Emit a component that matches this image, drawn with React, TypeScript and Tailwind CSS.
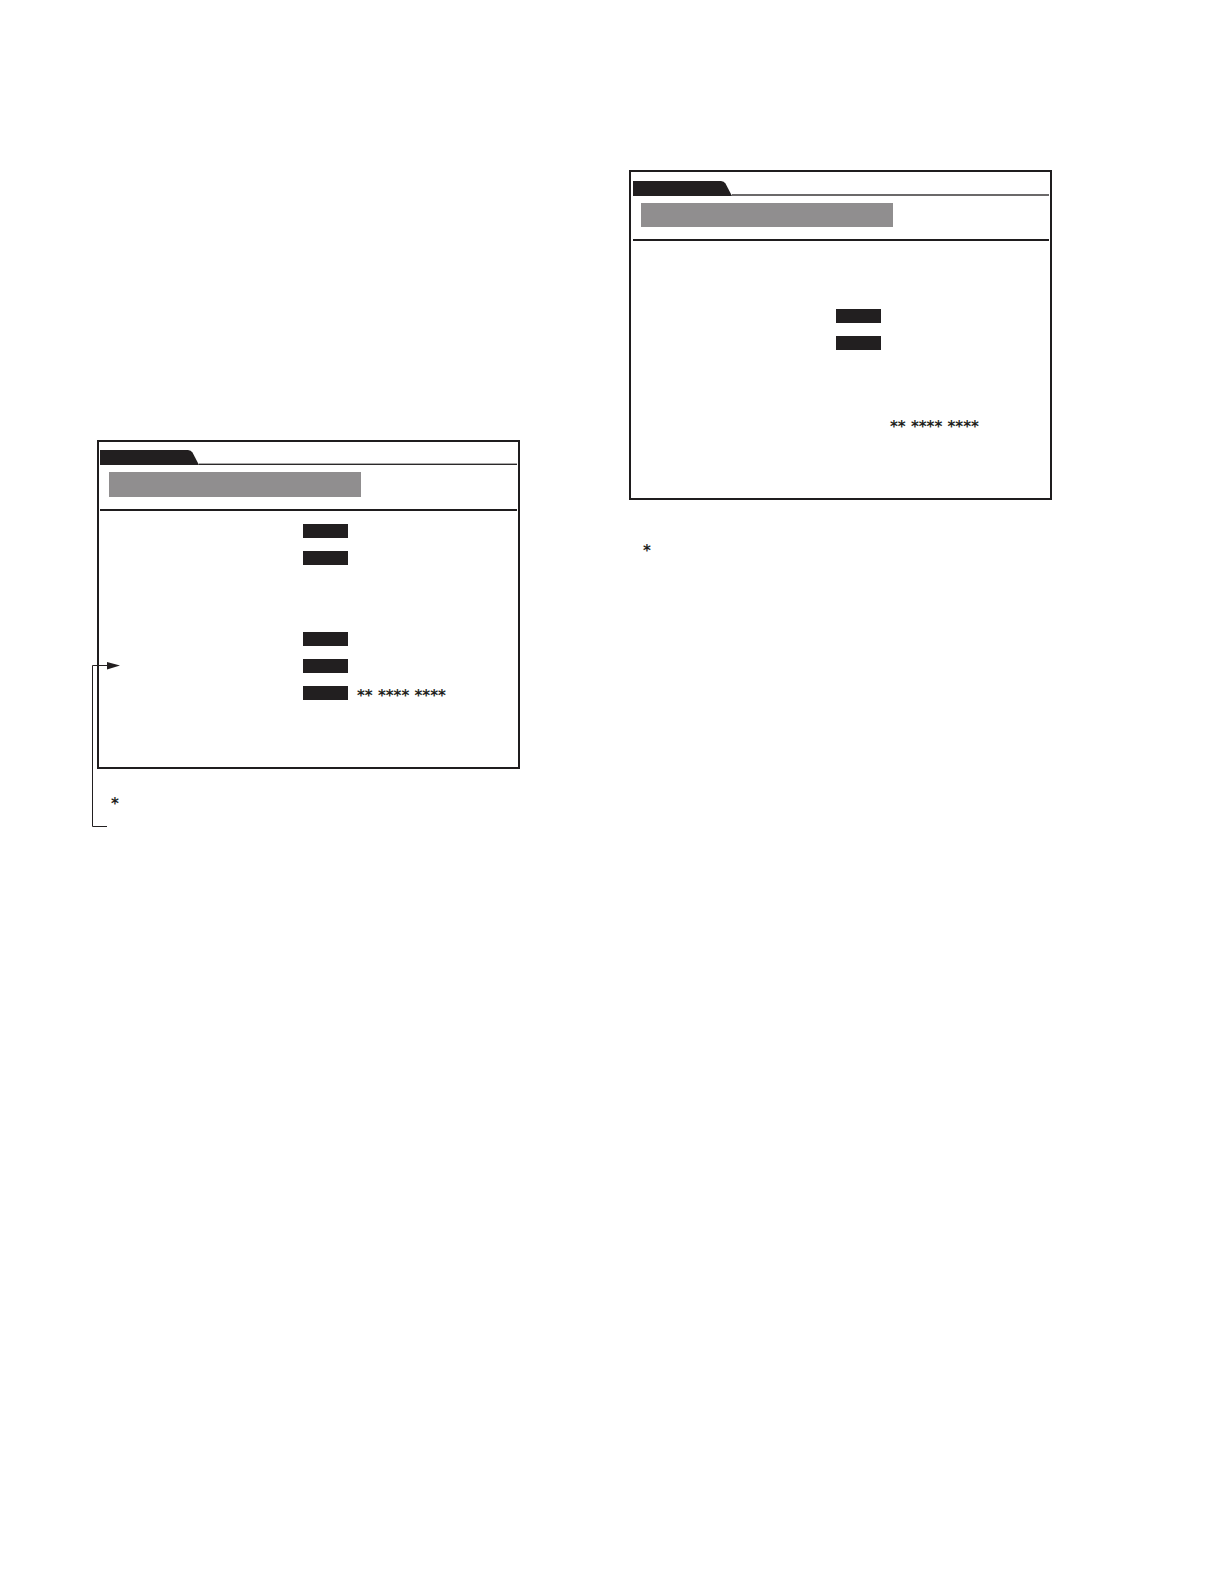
import clsx from 'clsx';

interface Row {
  chip?: boolean;
  value?: string;
}

interface ScreenPanelProps {
  rows: Row[];
  className: string;
  headerClass: string;
  ruleClass: string;
  bannerClass: string;
  bodyClass: string;
}

const MASKED = '** **** ****';

const leftRows: Row[] = [
  { chip: true },
  { chip: true },
  {},
  {},
  { chip: true },
  { chip: true },
  { chip: true, value: MASKED },
];

const rightRows: Row[] = [{}, {}, { chip: true }, { chip: true }, {}, {}, { value: MASKED }];

function ScreenPanel({
  rows,
  className,
  headerClass,
  ruleClass,
  bannerClass,
  bodyClass,
}: ScreenPanelProps) {
  return (
    <section className={clsx('border-2 border-[#1f1d1e] pr-px', className)}>
      {/* Tab with its rule */}
      <div className={clsx('flex items-end', headerClass)}>
        <svg className="h-[15px] w-[99px] shrink-0" viewBox="0 0 99 15" aria-hidden="true">
          <path d="M0 0H88Q91 0 92.5 2.5L99 15H0Z" fill="#221f20" />
        </svg>
        <div className={clsx('h-0.5 flex-1', ruleClass)} />
      </div>

      {/* Title banner */}
      <div className="border-b-2 border-[#1f1d1e] pt-[7px] pb-3">
        <div className={clsx('w-[252px] bg-[#908e8f]', bannerClass)} />
      </div>

      {/* Setting rows */}
      <ul className={clsx('flex flex-col gap-[13px] pb-[67px] pl-[203px]', bodyClass)}>
        {rows.map((row, i) => (
          <li key={i} className="flex h-3.5 items-start gap-[9px]">
            <span className={clsx('h-3.5 w-[45px] shrink-0', row.chip && 'bg-[#221f20]')} />
            {row.value && <span className="whitespace-nowrap">{row.value}</span>}
          </li>
        ))}
      </ul>
    </section>
  );
}

function PointerArrow() {
  return (
    <svg
      className="absolute top-[222px] -left-[5px] h-[165px] w-7"
      viewBox="0 0 28 165"
      aria-hidden="true"
    >
      <path d="M15 164.5H0.5V3.5H17" fill="none" stroke="#221f20" />
      <path d="M15 0L28 3.5L15 7.5Z" fill="#221f20" />
    </svg>
  );
}

export default function App() {
  return (
    <main className="grid min-h-screen grid-cols-2 gap-[109px] bg-white pr-[167px] pl-[97px] font-['DejaVu_Sans',sans-serif] text-[15px] leading-5 font-bold text-[#221f20]">
      <div className="pt-[440px]">
        <div className="relative">
          <ScreenPanel
            rows={leftRows}
            className="pl-px"
            headerClass="pt-2"
            ruleClass="border-t border-b border-t-[#aaa9a9] border-b-[#2b292a]"
            bannerClass="ml-[9px] h-[25px]"
            bodyClass="pt-[13px]"
          />
          <PointerArrow />
        </div>
        <p className="mt-[25px] pl-3.5">*</p>
      </div>

      <div className="pt-[170px]">
        <ScreenPanel
          rows={rightRows}
          className="pl-0.5"
          headerClass="pt-[9px]"
          ruleClass="bg-[#6b696a]"
          bannerClass="ml-2 h-6"
          bodyClass="pt-3.5"
        />
        <p className="mt-[41px] pl-3.5">*</p>
      </div>
    </main>
  );
}
